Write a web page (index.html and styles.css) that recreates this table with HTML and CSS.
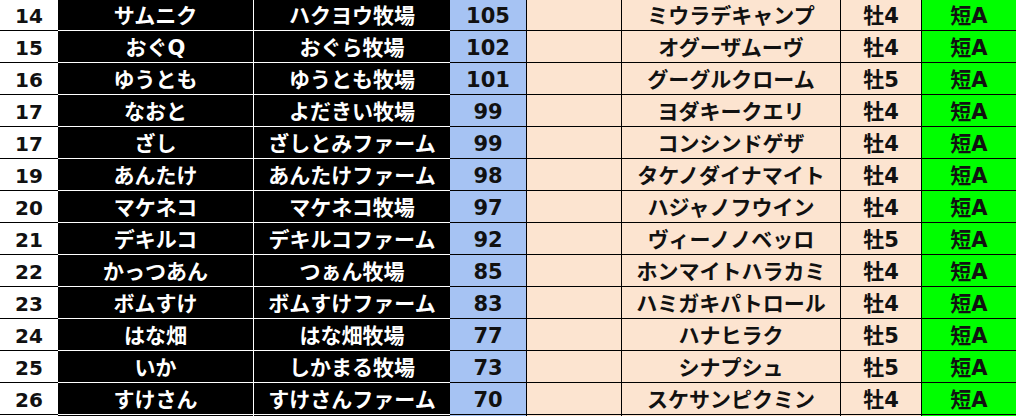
FILE: index.html
```html
<!DOCTYPE html>
<html lang="ja">
<head>
<meta charset="utf-8">
<link rel="stylesheet" href="styles.css">
</head>
<body>
<div class="sheet">
  <div class="row"><div class="c rank">14</div><div class="c name">サムニク</div><div class="c farm">ハクヨウ牧場</div><div class="c score">105</div><div class="c blank"></div><div class="c horse">ミウラデキャンプ</div><div class="c sex">牡4</div><div class="c dist">短A</div></div>
  <div class="row"><div class="c rank">15</div><div class="c name">おぐQ</div><div class="c farm">おぐら牧場</div><div class="c score">102</div><div class="c blank"></div><div class="c horse">オグーザムーヴ</div><div class="c sex">牡4</div><div class="c dist">短A</div></div>
  <div class="row"><div class="c rank">16</div><div class="c name">ゆうとも</div><div class="c farm">ゆうとも牧場</div><div class="c score">101</div><div class="c blank"></div><div class="c horse">グーグルクローム</div><div class="c sex">牡5</div><div class="c dist">短A</div></div>
  <div class="row"><div class="c rank">17</div><div class="c name">なおと</div><div class="c farm">よだきい牧場</div><div class="c score">99</div><div class="c blank"></div><div class="c horse">ヨダキークエリ</div><div class="c sex">牡4</div><div class="c dist">短A</div></div>
  <div class="row"><div class="c rank">17</div><div class="c name">ざし</div><div class="c farm">ざしとみファーム</div><div class="c score">99</div><div class="c blank"></div><div class="c horse">コンシンドゲザ</div><div class="c sex">牡4</div><div class="c dist">短A</div></div>
  <div class="row"><div class="c rank">19</div><div class="c name">あんたけ</div><div class="c farm">あんたけファーム</div><div class="c score">98</div><div class="c blank"></div><div class="c horse">タケノダイナマイト</div><div class="c sex">牡4</div><div class="c dist">短A</div></div>
  <div class="row"><div class="c rank">20</div><div class="c name">マケネコ</div><div class="c farm">マケネコ牧場</div><div class="c score">97</div><div class="c blank"></div><div class="c horse">ハジャノフウイン</div><div class="c sex">牡4</div><div class="c dist">短A</div></div>
  <div class="row"><div class="c rank">21</div><div class="c name">デキルコ</div><div class="c farm">デキルコファーム</div><div class="c score">92</div><div class="c blank"></div><div class="c horse">ヴィーノノベッロ</div><div class="c sex">牡5</div><div class="c dist">短A</div></div>
  <div class="row"><div class="c rank">22</div><div class="c name">かっつあん</div><div class="c farm">つぁん牧場</div><div class="c score">85</div><div class="c blank"></div><div class="c horse">ホンマイトハラカミ</div><div class="c sex">牡4</div><div class="c dist">短A</div></div>
  <div class="row"><div class="c rank">23</div><div class="c name">ボムすけ</div><div class="c farm">ボムすけファーム</div><div class="c score">83</div><div class="c blank"></div><div class="c horse">ハミガキパトロール</div><div class="c sex">牡4</div><div class="c dist">短A</div></div>
  <div class="row"><div class="c rank">24</div><div class="c name">はな畑</div><div class="c farm">はな畑牧場</div><div class="c score">77</div><div class="c blank"></div><div class="c horse">ハナヒラク</div><div class="c sex">牡5</div><div class="c dist">短A</div></div>
  <div class="row"><div class="c rank">25</div><div class="c name">いか</div><div class="c farm">しかまる牧場</div><div class="c score">73</div><div class="c blank"></div><div class="c horse">シナプシュ</div><div class="c sex">牡5</div><div class="c dist">短A</div></div>
  <div class="row"><div class="c rank">26</div><div class="c name">すけさん</div><div class="c farm">すけさんファーム</div><div class="c score">70</div><div class="c blank"></div><div class="c horse">スケサンピクミン</div><div class="c sex">牡4</div><div class="c dist">短A</div></div>
  <div class="row"><div class="c rank"></div><div class="c name"></div><div class="c farm"></div><div class="c score"></div><div class="c blank"></div><div class="c horse"></div><div class="c sex"></div><div class="c dist"></div></div>
</div>
</body>
</html>
```

FILE: styles.css
```css
html, body {
  margin: 0;
  padding: 0;
  background: #ffffff;
  overflow: hidden;
}

.sheet {
  margin-top: -1px;
  width: 1016px;
  height: 417px;
  overflow: hidden;
  font-family: "DejaVu Sans", "Noto Sans CJK JP", sans-serif;
  font-weight: 700;
  font-size: 21px;
}

.row {
  display: grid;
  grid-template-columns: 58px 196px 196px 77px 95px 219px 81px 1fr;
  height: 32px;
}

.c {
  box-sizing: border-box;
  display: flex;
  align-items: center;
  justify-content: center;
  height: 32px;
  padding-top: 3px;
  border-bottom: 1px solid #000;
  white-space: nowrap;
  color: #111;
  line-height: 1;
}

.rank {
  background: #ffffff;
  font-size: 20px;
}

.name,
.farm {
  background: #000000;
  color: #ffffff;
  border-bottom-color: #ffffff;
}

.name {
  border-right: 1px solid #ffffff;
}

.score {
  background: #a6c3f3;
  border-right: 1px solid #000;
}

.blank,
.horse,
.sex {
  background: #fce4d0;
  border-right: 1px solid #000;
}

.dist {
  background: #00ff00;
}
```
